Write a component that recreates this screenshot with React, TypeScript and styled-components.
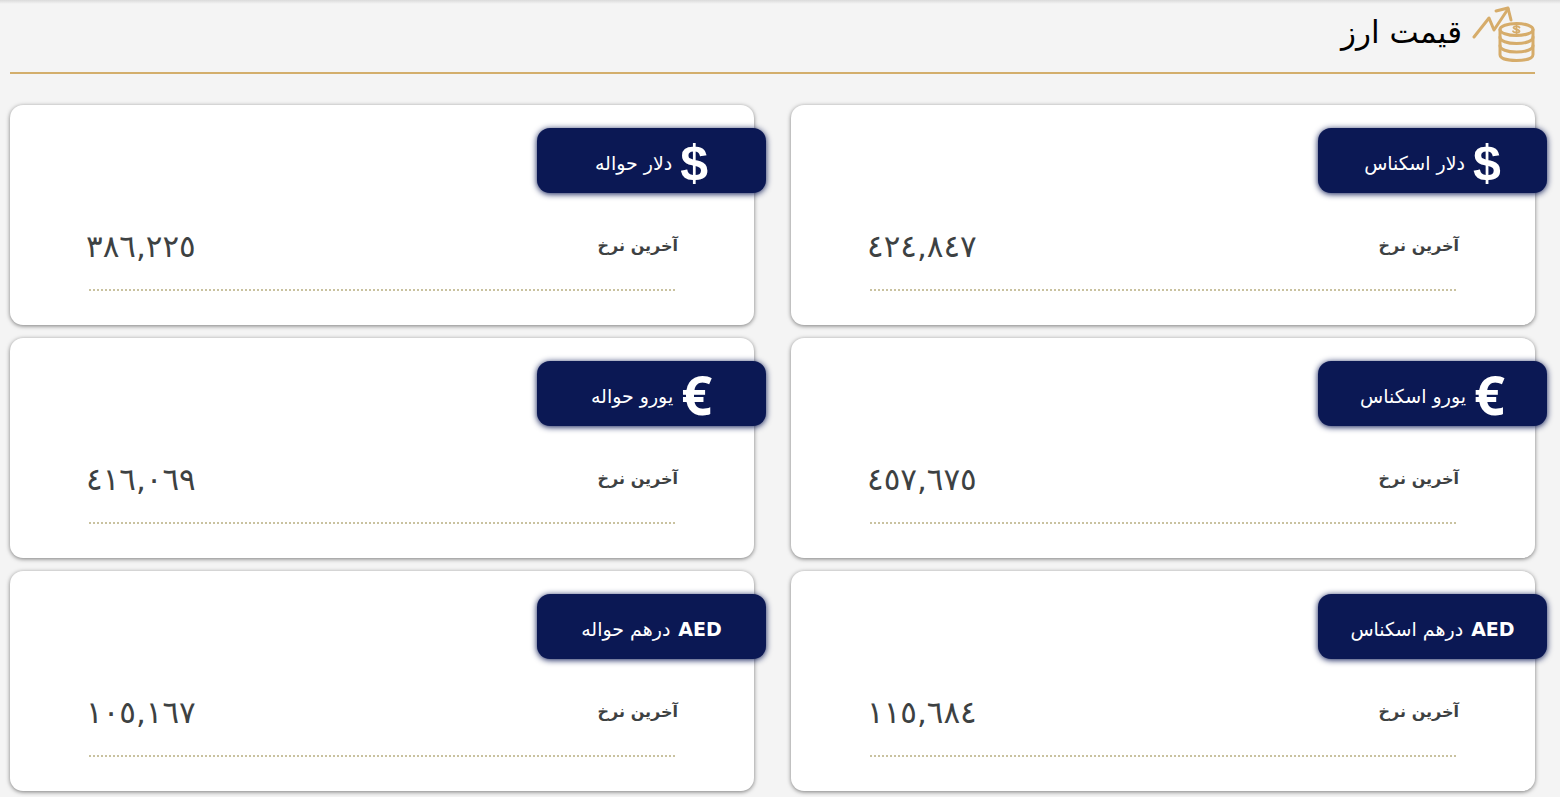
import React from 'react';
import styled, { createGlobalStyle } from 'styled-components';

const GlobalStyle = createGlobalStyle`
  *, *::before, *::after { box-sizing: border-box; }
  body {
    margin: 0;
    background: #f4f4f4;
    font-family: 'DejaVu Sans', sans-serif;
  }
`;

const Page = styled.main`
  direction: rtl;
  padding: 0 25px 6px 10px;
  background: linear-gradient(#dadada, #f4f4f4 4px);
`;

const Header = styled.header`
  display: flex;
  align-items: center;
  gap: 10px;
  height: 74px;
  padding-bottom: 4px;
  border-bottom: 2px solid #d3ae6c;
  margin-bottom: 31px;
`;

const Title = styled.h1`
  margin: 0;
  padding-bottom: 4px;
  font-size: 31px;
  line-height: 60px;
  font-weight: 400;
  color: #000;
`;

const Grid = styled.div`
  display: grid;
  grid-template-columns: 1fr 1fr;
  gap: 13px 37px;
`;

const Card = styled.article`
  padding: 23px 0 34px;
  background: #fff;
  border-radius: 13px;
  box-shadow: 0 1px 4px rgba(0, 0, 0, 0.5);
`;

const Badge = styled.h2`
  display: flex;
  align-items: center;
  justify-content: center;
  gap: 8px;
  width: 229px;
  height: 65px;
  margin: 0 -12px 0 0;
  padding-top: 5px;
  border-radius: 13px;
  background: #0b1854;
  box-shadow: 0 1px 6px #0b1854;
  color: #fff;
  font-size: 19px;
  line-height: 32px;
  font-weight: 400;
  white-space: nowrap;
`;

const symbolFonts = {
  dollar: "700 50px 'Liberation Sans', sans-serif",
  euro: "700 54px 'Open Sans', sans-serif",
  dirham: "700 19px 'DejaVu Sans', sans-serif",
};

const Symbol = styled.span<{ $kind: keyof typeof symbolFonts }>`
  font: ${({ $kind }) => symbolFonts[$kind]};
  line-height: 50px;
  padding-bottom: ${({ $kind }) => ($kind === 'euro' ? 4 : 0)}px;
`;

const Rate = styled.dl`
  display: flex;
  align-items: center;
  justify-content: space-between;
  height: 60px;
  margin: 23px 76px 13px;
  color: #3d4142;
`;

const Divider = styled.hr`
  margin: 0 79px;
  border: 0;
  border-top: 2px dotted #c9c2a0;
`;

const Label = styled.dt`
  font-size: 16px;
  line-height: 32px;
  font-weight: 700;
`;

const Value = styled.dd`
  margin: 0;
  font-size: 31px;
  line-height: 40px;
`;

const CoinsIcon = () => (
  <svg width="63" height="58" viewBox="0 0 63 58" fill="none" stroke="#d6ac6a" strokeWidth="3" strokeLinecap="round" strokeLinejoin="round" aria-hidden="true">
    <path d="M2 32 17 13l5 12L36 4" />
    <path d="M24 6 36 3l3 12" />
    <ellipse cx="44.500" cy="24.500" rx="16.500" ry="6" />
    <path d="M28 24.500v25c0 4 7 6 16.500 6S61 53.500 61 49.500v-25" />
    <path d="M28 32c0 4 7 6.500 16.500 6.500S61 36 61 32" />
    <path d="M28 40.500c0 4 7 6.500 16.500 6.500S61 44.500 61 40.500" />
    <path strokeWidth="1.800" d="M47.500 22.500c-1-1.800-5.500-1.800-6 0 0 2.300 6 1.500 6 3.800-.5 1.800-5.500 1.800-6.500 0M44.500 20.500v8" />
  </svg>
);

type Kind = keyof typeof symbolFonts;

const glyphs: Record<Kind, string> = { dollar: '$', euro: '€', dirham: 'AED' };

const rates: { kind: Kind; name: string; value: string }[] = [
  { kind: 'dollar', name: 'دلار اسکناس', value: '٤٢٤,٨٤٧' },
  { kind: 'dollar', name: 'دلار حواله', value: '٣٨٦,٢٢٥' },
  { kind: 'euro', name: 'یورو اسکناس', value: '٤٥٧,٦٧٥' },
  { kind: 'euro', name: 'یورو حواله', value: '٤١٦,٠٦٩' },
  { kind: 'dirham', name: 'درهم اسکناس', value: '١١٥,٦٨٤' },
  { kind: 'dirham', name: 'درهم حواله', value: '١٠٥,١٦٧' },
];

export default function App() {
  return (
    <Page lang="fa">
      <GlobalStyle />
      <Header>
        <CoinsIcon />
        <Title>قیمت ارز</Title>
      </Header>
      <Grid>
        {rates.map(({ kind, name, value }) => (
          <Card key={name}>
            <Badge>
              <Symbol $kind={kind}>{glyphs[kind]}</Symbol>
              <span>{name}</span>
            </Badge>
            <Rate>
              <Label>آخرین نرخ</Label>
              <Value>{value}</Value>
            </Rate>
            <Divider />
          </Card>
        ))}
      </Grid>
    </Page>
  );
}
